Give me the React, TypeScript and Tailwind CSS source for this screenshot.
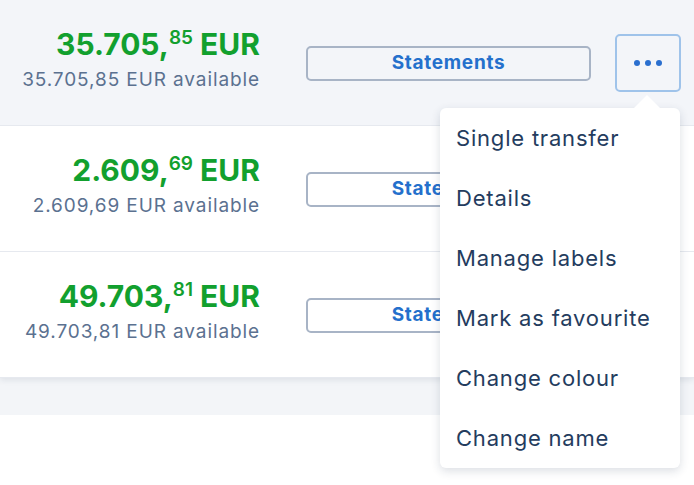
import React from 'react';

interface Account {
  whole: string;
  cents: string;
  available: string;
}

const accounts: Account[] = [
  { whole: '35.705,', cents: '85', available: '35.705,85 EUR available' },
  { whole: '2.609,', cents: '69', available: '2.609,69 EUR available' },
  { whole: '49.703,', cents: '81', available: '49.703,81 EUR available' },
];

const menuItems = [
  'Single transfer',
  'Details',
  'Manage labels',
  'Mark as favourite',
  'Change colour',
  'Change name',
];

const AccountRow = ({ account, active }: { account: Account; active: boolean }) => {
  return (
    <div
      className={`flex h-[126px] items-center border-b border-[#e6e9ef] ${
        active ? 'bg-[#f3f5f9]' : 'bg-white'
      }`}
    >
      <div className="-mt-[6px] flex w-[260px] flex-col items-end">
        <p className="text-[30px] font-bold leading-[36px] text-[#12a02e]">
          {account.whole}
          <span className="relative -top-[11px] text-[19px] font-semibold">{account.cents}</span> EUR
        </p>
        <p className="text-[19px] leading-[26px] tracking-[0.9px] text-[#5b7190]">{account.available}</p>
      </div>
      <button className="ml-[46px] mt-[2px] flex h-[35px] w-[285px] items-center justify-center rounded-[5px] border-2 border-[#a8b4c6] bg-transparent text-[19px] font-bold tracking-[0.7px] text-[#2470cc]">
        Statements
      </button>
      {active && (
        <button className="ml-[24px] flex h-[58px] w-[66px] items-center justify-center gap-[5px] rounded-[5px] border-2 border-[#9fc3ea] bg-[#f3f5f9]">
          <span className="h-[6px] w-[6px] rounded-full bg-[#2a6fcf]" />
          <span className="h-[6px] w-[6px] rounded-full bg-[#2a6fcf]" />
          <span className="h-[6px] w-[6px] rounded-full bg-[#2a6fcf]" />
        </button>
      )}
    </div>
  );
};

export default function App() {
  return (
    <div
      className="relative h-[485px] w-[694px] overflow-hidden bg-white"
      style={{ fontFamily: 'Inter, "Noto Sans", sans-serif' }}
    >
      <div className="relative z-10 shadow-[0_2px_6px_rgba(30,50,80,0.10)]">
        {accounts.map((a, i) => (
          <AccountRow key={a.whole} account={a} active={i === 0} />
        ))}
      </div>
      <div className="h-[37px] bg-[#f3f5f8]" />

      <div className="absolute left-[440px] top-[108px] z-20 w-[240px] rounded-[6px] bg-white shadow-[0_3px_10px_rgba(30,50,80,0.16)]">
        <div className="absolute -top-[13px] right-[19px] h-0 w-0 border-x-[14px] border-b-[14px] border-x-transparent border-b-white" />
        {menuItems.map((item) => (
          <div
            key={item}
            className="flex h-[60px] items-center px-[16px] text-[22px] tracking-[0.8px] text-[#243c5e]"
          >
            {item}
          </div>
        ))}
      </div>
    </div>
  );
}
